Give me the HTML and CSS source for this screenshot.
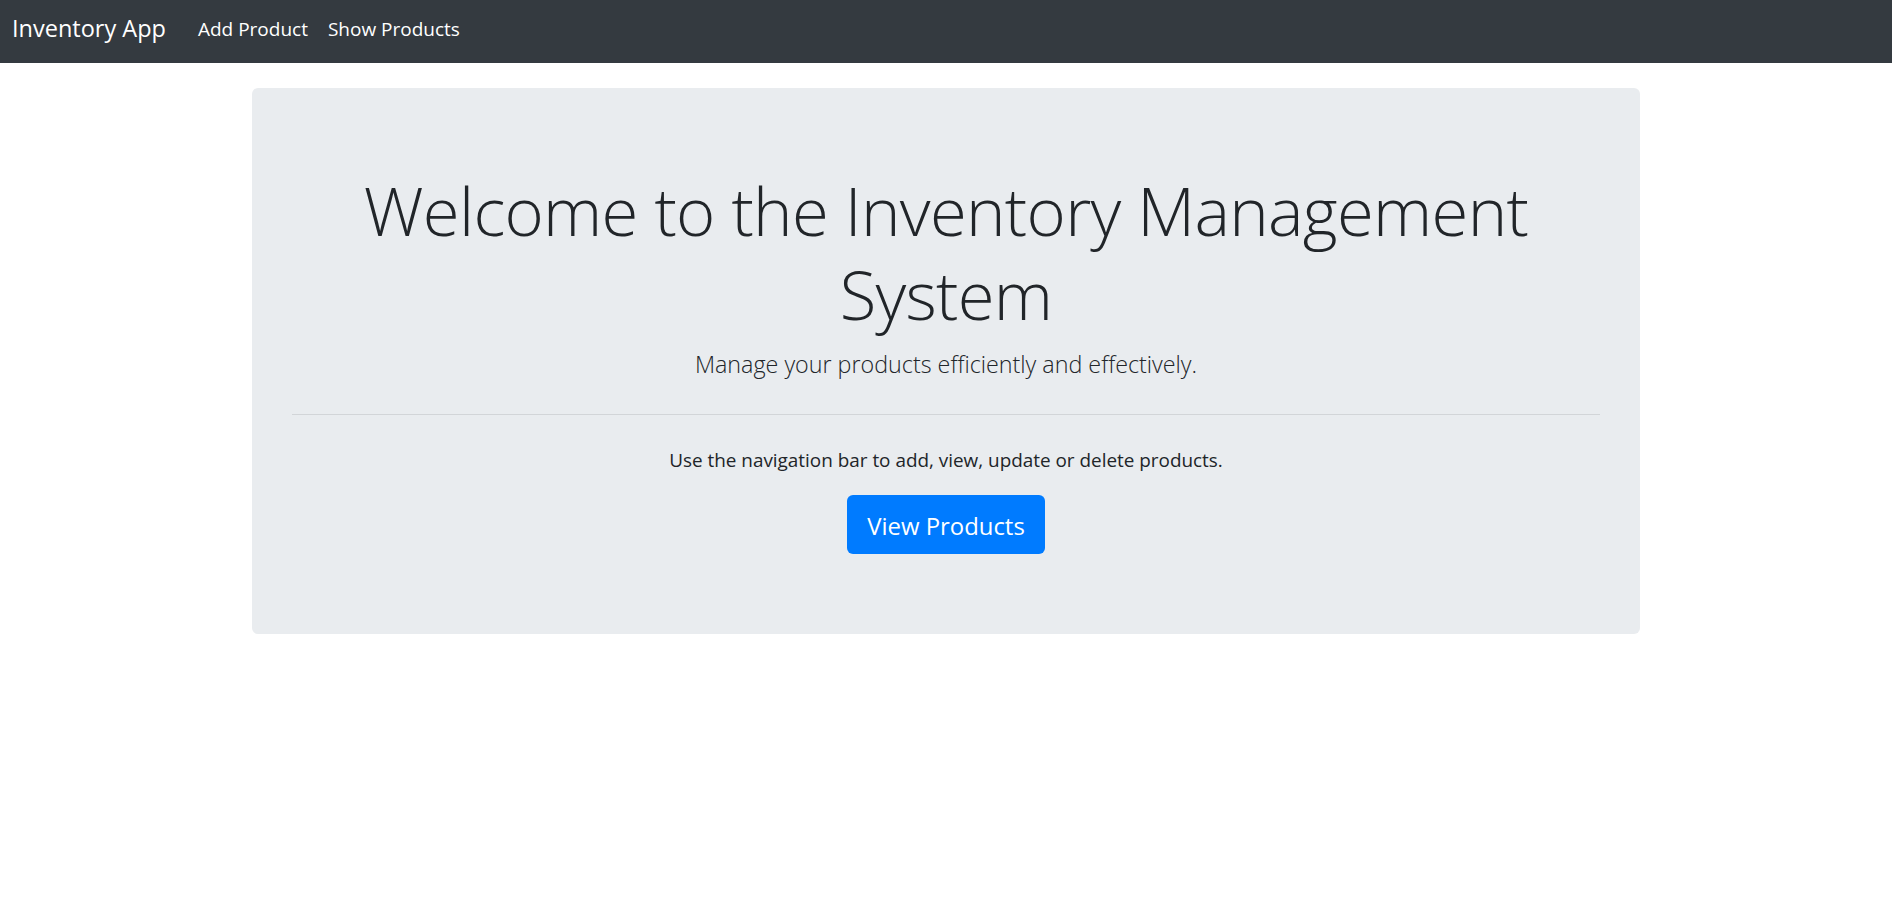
FILE: index.html
```html
<!DOCTYPE html>
<html lang="en">
<head>
<meta charset="utf-8">
<title>Inventory App</title>
<link rel="stylesheet" href="styles.css">
</head>
<body>
<nav class="navbar">
  <a class="brand" href="#">Inventory App</a>
  <ul class="nav">
    <li><a class="nav-link" href="#">Add Product</a></li>
    <li><a class="nav-link" href="#">Show Products</a></li>
  </ul>
</nav>
<main class="container">
  <section class="jumbotron">
    <h1 class="display">Welcome to the Inventory Management System</h1>
    <p class="lead">Manage your products efficiently and effectively.</p>
    <hr class="divider">
    <p class="info">Use the navigation bar to add, view, update or delete products.</p>
    <a class="btn" href="#">View Products</a>
  </section>
</main>
</body>
</html>
```
FILE: styles.css
```css
* { box-sizing: border-box; }
html, body { margin: 0; padding: 0; }
body {
  font-family: "Open Sans", "Noto Sans", "Liberation Sans", sans-serif;
  color: #212529;
  background: #fff;
}
.navbar {
  height: 63px;
  background: #343a40;
  display: flex;
  align-items: center;
  padding: 0 12px;
}
.brand {
  color: #fff;
  text-decoration: none;
  font-size: 23.5px;
  line-height: 1;
  margin-right: 22px;
  padding-bottom: 5px;
}
.nav {
  list-style: none;
  margin: 0;
  padding: 0;
  display: flex;
}
.nav-link {
  display: block;
  color: #fff;
  text-decoration: none;
  font-size: 19px;
  padding: 0 10px 4px;
  line-height: 1;
}
.container {
  width: 1388px;
  margin: 25px auto 0;
}
.jumbotron {
  background: #e9ecef;
  border-radius: 6px;
  padding: 80px 40px;
  display: flex;
  flex-direction: column;
  align-items: center;
  text-align: center;
}
.display {
  margin: 0 0 10px;
  font-size: 67px;
  letter-spacing: -0.7px;
  font-weight: 300;
  line-height: 84px;
  width: 100%;
}
.lead {
  margin: 0;
  font-size: 23.3px;
  font-weight: 300;
  line-height: 37.5px;
}
.divider {
  width: 100%;
  margin: 30px 0;
  border: 0;
  border-top: 1px solid #d2d5d8;
  height: 0;
}
.info {
  margin: 0 0 20px;
  font-size: 18.9px;
  line-height: 30px;
}
.btn {
  display: block;
  width: 198px;
  height: 59px;
  padding-top: 3px;
  background: #007bff;
  color: #fff;
  text-decoration: none;
  font-size: 23.9px;
  line-height: 56px;
  border-radius: 6px;
}
```
